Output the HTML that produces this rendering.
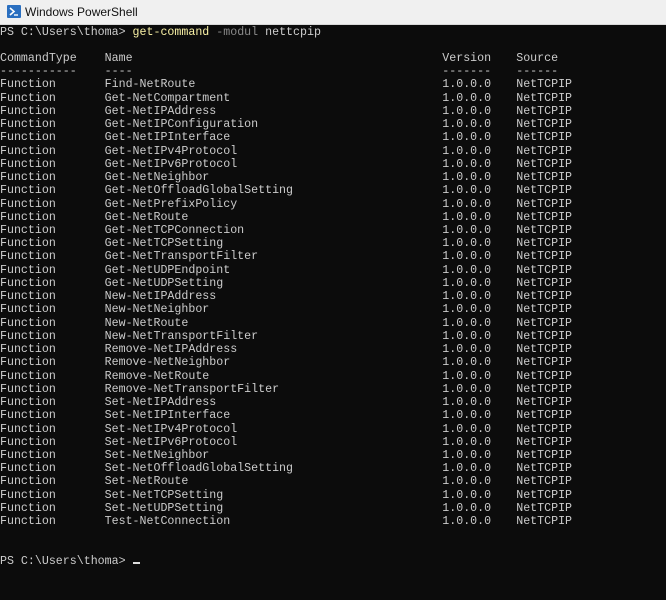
<!DOCTYPE html>
<html><head><meta charset="utf-8"><style>
*{margin:0;padding:0}
body{width:666px;height:600px;background:#0c0c0c;overflow:hidden;position:relative}
.tb{position:absolute;left:0;top:0;width:666px;height:24px;background:#f0f0f0;border-bottom:1px solid #d8d8d8}
.tb span{position:absolute;left:25px;top:5px;font:12px "Liberation Sans",sans-serif;color:#111}
.ic{position:absolute;left:7px;top:5px;width:14px;height:13px;background:#2a6fc0;border-radius:1px}
.t{position:absolute;left:0;top:25.5px;font:11.63px/13.24px "Liberation Mono",monospace;color:#cccccc}
.t div{height:13.24px;white-space:pre}
.t i{font-style:normal;display:inline-block;width:15ch}
.t b{font-weight:normal;display:inline-block;width:48.4ch}
.t u{text-decoration:none;display:inline-block;width:10.6ch}
.y{color:#f9f1a5}.g{color:#8a8a8a}
.cur{display:inline-block;width:7px;height:2px;background:#ddd;vertical-align:baseline}
</style></head><body>
<div class="tb"><div class="ic"><svg width="14" height="13" viewBox="0 0 14 13"><path d="M3 3 L7 6.5 L3 10" stroke="#fff" stroke-width="1.6" fill="none"/><path d="M7 10 H11" stroke="#fff" stroke-width="1.4"/></svg></div><span>Windows PowerShell</span></div>
<div class="t"><div>PS C:\Users\thoma&gt; <span class="y">get-command</span> <span class="g">-modul</span> nettcpip</div><div></div><div><i>CommandType</i><b>Name</b><u>Version</u>Source</div><div><i>-----------</i><b>----</b><u>-------</u>------</div><div><i>Function</i><b>Find-NetRoute</b><u>1.0.0.0</u>NetTCPIP</div><div><i>Function</i><b>Get-NetCompartment</b><u>1.0.0.0</u>NetTCPIP</div><div><i>Function</i><b>Get-NetIPAddress</b><u>1.0.0.0</u>NetTCPIP</div><div><i>Function</i><b>Get-NetIPConfiguration</b><u>1.0.0.0</u>NetTCPIP</div><div><i>Function</i><b>Get-NetIPInterface</b><u>1.0.0.0</u>NetTCPIP</div><div><i>Function</i><b>Get-NetIPv4Protocol</b><u>1.0.0.0</u>NetTCPIP</div><div><i>Function</i><b>Get-NetIPv6Protocol</b><u>1.0.0.0</u>NetTCPIP</div><div><i>Function</i><b>Get-NetNeighbor</b><u>1.0.0.0</u>NetTCPIP</div><div><i>Function</i><b>Get-NetOffloadGlobalSetting</b><u>1.0.0.0</u>NetTCPIP</div><div><i>Function</i><b>Get-NetPrefixPolicy</b><u>1.0.0.0</u>NetTCPIP</div><div><i>Function</i><b>Get-NetRoute</b><u>1.0.0.0</u>NetTCPIP</div><div><i>Function</i><b>Get-NetTCPConnection</b><u>1.0.0.0</u>NetTCPIP</div><div><i>Function</i><b>Get-NetTCPSetting</b><u>1.0.0.0</u>NetTCPIP</div><div><i>Function</i><b>Get-NetTransportFilter</b><u>1.0.0.0</u>NetTCPIP</div><div><i>Function</i><b>Get-NetUDPEndpoint</b><u>1.0.0.0</u>NetTCPIP</div><div><i>Function</i><b>Get-NetUDPSetting</b><u>1.0.0.0</u>NetTCPIP</div><div><i>Function</i><b>New-NetIPAddress</b><u>1.0.0.0</u>NetTCPIP</div><div><i>Function</i><b>New-NetNeighbor</b><u>1.0.0.0</u>NetTCPIP</div><div><i>Function</i><b>New-NetRoute</b><u>1.0.0.0</u>NetTCPIP</div><div><i>Function</i><b>New-NetTransportFilter</b><u>1.0.0.0</u>NetTCPIP</div><div><i>Function</i><b>Remove-NetIPAddress</b><u>1.0.0.0</u>NetTCPIP</div><div><i>Function</i><b>Remove-NetNeighbor</b><u>1.0.0.0</u>NetTCPIP</div><div><i>Function</i><b>Remove-NetRoute</b><u>1.0.0.0</u>NetTCPIP</div><div><i>Function</i><b>Remove-NetTransportFilter</b><u>1.0.0.0</u>NetTCPIP</div><div><i>Function</i><b>Set-NetIPAddress</b><u>1.0.0.0</u>NetTCPIP</div><div><i>Function</i><b>Set-NetIPInterface</b><u>1.0.0.0</u>NetTCPIP</div><div><i>Function</i><b>Set-NetIPv4Protocol</b><u>1.0.0.0</u>NetTCPIP</div><div><i>Function</i><b>Set-NetIPv6Protocol</b><u>1.0.0.0</u>NetTCPIP</div><div><i>Function</i><b>Set-NetNeighbor</b><u>1.0.0.0</u>NetTCPIP</div><div><i>Function</i><b>Set-NetOffloadGlobalSetting</b><u>1.0.0.0</u>NetTCPIP</div><div><i>Function</i><b>Set-NetRoute</b><u>1.0.0.0</u>NetTCPIP</div><div><i>Function</i><b>Set-NetTCPSetting</b><u>1.0.0.0</u>NetTCPIP</div><div><i>Function</i><b>Set-NetUDPSetting</b><u>1.0.0.0</u>NetTCPIP</div><div><i>Function</i><b>Test-NetConnection</b><u>1.0.0.0</u>NetTCPIP</div><div></div><div></div><div>PS C:\Users\thoma&gt; <span class="cur"></span></div></div>
</body></html>
